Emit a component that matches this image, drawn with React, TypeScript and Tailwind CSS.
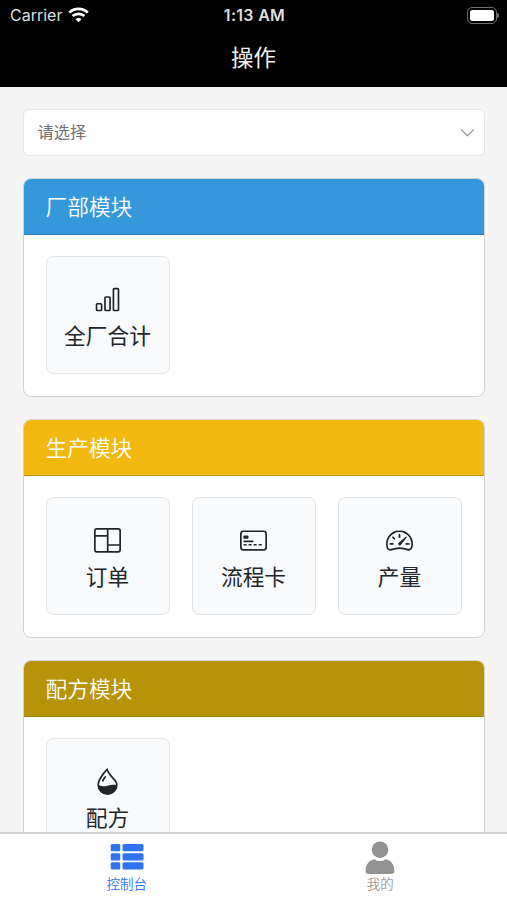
import { ReactNode } from "react";
import { BsBarChart, BsCreditCard2Front, BsDropletHalf, BsSpeedometer2 } from "react-icons/bs";

type ModuleItem = {
  label: string;
  icon: ReactNode;
};

type ModuleProps = {
  title: string;
  headerClass: string;
  items: ModuleItem[];
};

const StatusBar: React.FC = () => {
  return (
    <div className="grid grid-cols-3 items-center h-[30px] pl-[10px] pr-[8px] font-['Inter','Liberation_Sans',sans-serif] text-[16px] leading-[30px] text-[#dedede]">
      <div className="flex items-center gap-[6px]">
        <span>Carrier</span>
        <svg width="21" height="16" viewBox="0 0 21 16" fill="none" stroke="#fff" strokeWidth="2.7">
          <path d="M1.2 5.6C6.4 .6 14.6 .6 19.8 5.6" />
          <path d="M4.6 9.1c3.3-3.1 8.5-3.1 11.8 0" />
          <path d="M10.5 15.2l-3-3c1.7-1.6 4.3-1.6 6 0z" fill="#fff" stroke="none" />
        </svg>
      </div>
      <span className="text-center font-semibold tracking-[0.3px] whitespace-nowrap">1:13 AM</span>
      <div className="flex items-center justify-end">
        <div className="w-[30px] h-[17px] rounded-[5px] border border-[#6c6c6c] p-[2px]">
          <div className="w-full h-full bg-white rounded-[2.5px]" />
        </div>
        <div className="w-[2px] h-[5px] rounded-r-full bg-[#6c6c6c]" />
      </div>
    </div>
  );
};

const OrderIcon: React.FC<{ className: string }> = ({ className }) => {
  return (
    <svg viewBox="0 0 27 27" fill="none" stroke="currentColor" strokeWidth="1.7" className={className}>
      <rect x="0.85" y="1.85" width="25.3" height="23" rx="2" />
      <path d="M13.7 2v23M1 8.9h12.7M13.7 18h12.5" />
    </svg>
  );
};

const Module: React.FC<ModuleProps> = ({ title, headerClass, items }) => {
  return (
    <section className="h-[219px] shrink-0 bg-white border border-[#d2d2d2] rounded-[8px] overflow-hidden">
      <h2 className={`h-[56px] px-[22px] text-[21.7px] leading-[57px] font-[350] text-white border-b ${headerClass}`}>{title}</h2>
      <div className="grid grid-cols-3 gap-[22px] px-[22px] pt-[21px]">
        {items.map((item) => (
          <button
            key={item.label}
            type="button"
            className="flex flex-col items-center h-[118px] pt-[29px] bg-[#f8fafc] border border-[#e2e4e6] rounded-[7px] text-[#212529]"
          >
            {item.icon}
            <span className="mt-[8px] text-[21.7px] leading-[32px] font-normal whitespace-nowrap">{item.label}</span>
          </button>
        ))}
      </div>
    </section>
  );
};

const TabBar: React.FC = () => {
  return (
    <nav className="grid grid-cols-2 h-[68px] shrink-0 bg-white border-t-2 border-[#d3d3d3] text-[13.5px] leading-[20px] font-[350]">
      <a href="#" className="flex flex-col items-center pt-[9px] text-[#2f74ee]">
        <svg width="34" height="28" viewBox="0 0 34 28" fill="currentColor">
          <rect x="0.7" y="1" width="9.6" height="7.3" rx="1.5" />
          <rect x="12.5" y="1" width="21" height="7.3" rx="1.5" />
          <rect x="0.7" y="10.2" width="9.6" height="7.3" rx="1.5" />
          <rect x="12.5" y="10.2" width="21" height="7.3" rx="1.5" />
          <rect x="0.7" y="19.3" width="9.6" height="7.3" rx="1.5" />
          <rect x="12.5" y="19.3" width="21" height="7.3" rx="1.5" />
        </svg>
        <span className="mt-[4px]">控制台</span>
      </a>
      <a href="#" className="flex flex-col items-center pt-[7px] text-[#9b9b9b]">
        <svg width="30" height="34" viewBox="0 0 30 34" fill="#929292">
          <circle cx="15" cy="8.7" r="8.3" />
          <path d="M9 18.2Q15 22 21 18.2C26.5 19.6 29.4 24 29.4 30Q29.4 33 26.5 33H3.5Q.6 33 .6 30C.6 24 3.5 19.6 9 18.2Z" />
        </svg>
        <span>我的</span>
      </a>
    </nav>
  );
};

const App: React.FC = () => {
  const iconClass = "w-[27px] h-[27px] shrink-0";

  const modules: ModuleProps[] = [
    {
      title: "厂部模块",
      headerClass: "bg-[#3498db] border-[#2b7db4]",
      items: [{ label: "全厂合计", icon: <BsBarChart className={iconClass} /> }],
    },
    {
      title: "生产模块",
      headerClass: "bg-[#f1b90f] border-[#c1940c]",
      items: [
        { label: "订单", icon: <OrderIcon className={iconClass} /> },
        { label: "流程卡", icon: <BsCreditCard2Front className={iconClass} /> },
        { label: "产量", icon: <BsSpeedometer2 className={iconClass} /> },
      ],
    },
    {
      title: "配方模块",
      headerClass: "bg-[#b7930a] border-[#a5850c]",
      items: [{ label: "配方", icon: <BsDropletHalf className={iconClass} /> }],
    },
  ];

  return (
    <div className="flex flex-col w-[507px] h-[900px] overflow-hidden bg-[#f5f5f5] font-['Liberation_Sans','Noto_Sans_CJK_SC',sans-serif]">
      <header className="h-[87px] shrink-0 bg-black text-white">
        <StatusBar />
        <h1 className="text-center text-[22.5px] leading-[58px] font-normal text-[#f2f2f2]">操作</h1>
      </header>
      <main className="flex flex-col flex-1 min-h-0 gap-[22px] px-[22.5px] pt-[22px] overflow-hidden">
        <button
          type="button"
          className="flex items-center justify-between h-[47px] shrink-0 pl-[14px] pr-[9px] bg-white border border-[#e6e6e6] rounded-[6px] text-[16.3px] text-[#707070]"
        >
          <span>请选择</span>
          <svg width="15" height="10" viewBox="0 0 15 10" fill="none" stroke="#a3a3a3" strokeWidth="1.6">
            <path d="M1.2 1.5l6.3 6.2 6.3-6.2" />
          </svg>
        </button>
        {modules.map((module) => (
          <Module key={module.title} {...module} />
        ))}
      </main>
      <TabBar />
    </div>
  );
};

export default App;
